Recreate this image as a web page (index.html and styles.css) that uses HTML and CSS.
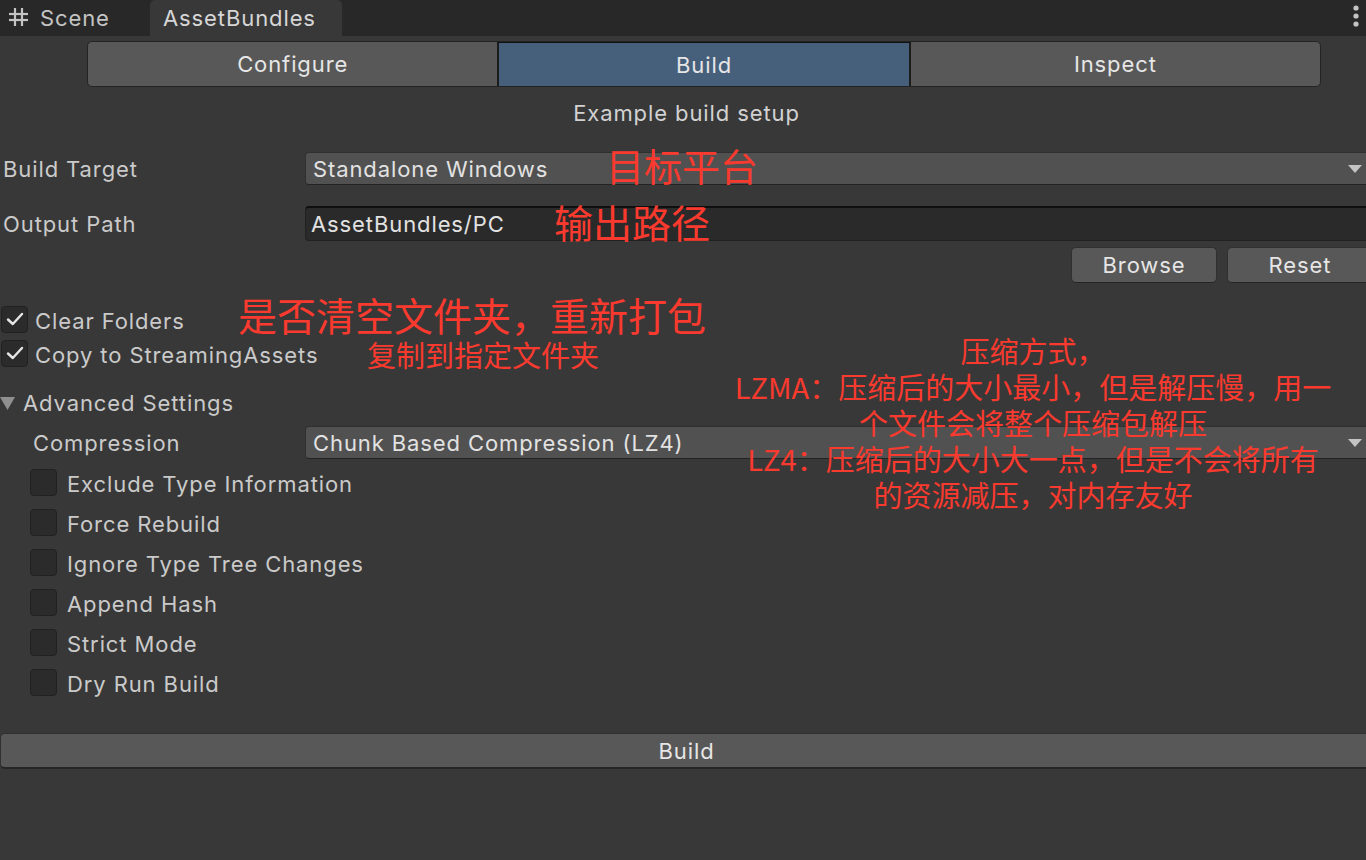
FILE: index.html
```html
<!DOCTYPE html>
<html lang="zh-CN">
<head>
<meta charset="utf-8">
<title>AssetBundles</title>
<link rel="stylesheet" href="styles.css">
</head>
<body>
<div class="window">
  <div class="tabbar">
    <div class="tab">
      <svg class="scene-icon" width="21" height="20" viewBox="0 0 21 20">
        <g stroke="#c4c4c4" stroke-width="2.2" fill="none">
          <line x1="7" y1="1" x2="7" y2="19"/>
          <line x1="14" y1="1" x2="14" y2="19"/>
          <line x1="1" y1="7" x2="20" y2="7"/>
          <line x1="1" y1="13" x2="20" y2="13"/>
        </g>
      </svg>
      <span>Scene</span>
    </div>
    <div class="tab active">AssetBundles</div>
    <div class="spacer"></div>
    <svg class="kebab" width="6" height="22" viewBox="0 0 6 22">
      <circle cx="3" cy="3" r="2.6" fill="#c4c4c4"/>
      <circle cx="3" cy="11" r="2.6" fill="#c4c4c4"/>
      <circle cx="3" cy="19" r="2.6" fill="#c4c4c4"/>
    </svg>
  </div>

  <div class="content">
    <div class="toolbar">
      <div class="seg">Configure</div>
      <div class="seg on">Build</div>
      <div class="seg">Inspect</div>
    </div>

    <div class="subtitle">Example build setup</div>

    <div class="row r-target">
      <div class="label">Build Target</div>
      <div class="dropdown">
        <span>Standalone Windows</span>
        <svg class="arrow" width="14" height="8" viewBox="0 0 14 8"><path d="M0 0H14L7 8Z" fill="#c4c4c4"/></svg>
      </div>
    </div>

    <div class="row r-output">
      <div class="label">Output Path</div>
      <div class="textfield">AssetBundles/PC</div>
    </div>

    <div class="btnrow">
      <div class="btn">Browse</div>
      <div class="btn">Reset</div>
    </div>

    <div class="toggle first">
      <div class="box checked">
        <svg width="18" height="14" viewBox="0 0 18 14"><path d="M2 7.5L6.8 12L16 2" stroke="#e6e6e6" stroke-width="2.4" fill="none" stroke-linecap="round" stroke-linejoin="round"/></svg>
      </div>
      <span>Clear Folders</span>
    </div>
    <div class="toggle">
      <div class="box checked">
        <svg width="18" height="14" viewBox="0 0 18 14"><path d="M2 7.5L6.8 12L16 2" stroke="#e6e6e6" stroke-width="2.4" fill="none" stroke-linecap="round" stroke-linejoin="round"/></svg>
      </div>
      <span>Copy to StreamingAssets</span>
    </div>

    <div class="foldout">
      <svg class="fold-arrow" width="15" height="15" viewBox="0 0 15 15"><path d="M0 1H15L7.5 14Z" fill="#8f8f8f"/></svg>
      <span>Advanced Settings</span>
    </div>

    <div class="group">
      <div class="row r-compress">
        <div class="label">Compression</div>
        <div class="dropdown">
          <span>Chunk Based Compression (LZ4)</span>
          <svg class="arrow" width="14" height="8" viewBox="0 0 14 8"><path d="M0 0H14L7 8Z" fill="#c4c4c4"/></svg>
        </div>
      </div>
      <div class="checks">
        <div class="check"><div class="box"></div><span>Exclude Type Information</span></div>
        <div class="check"><div class="box"></div><span>Force Rebuild</span></div>
        <div class="check"><div class="box"></div><span>Ignore Type Tree Changes</span></div>
        <div class="check"><div class="box"></div><span>Append Hash</span></div>
        <div class="check"><div class="box"></div><span>Strict Mode</span></div>
        <div class="check"><div class="box"></div><span>Dry Run Build</span></div>
      </div>
    </div>

    <div class="buildbtn">Build</div>
  </div>

  <div class="note n-target">目标平台</div>
  <div class="note n-output">输出路径</div>
  <div class="note n-clear">是否清空文件夹，重新打包</div>
  <div class="note n-copy">复制到指定文件夹</div>
  <div class="note n-compress">
    <div>压缩方式，</div>
    <div>LZMA：压缩后的大小最小，但是解压慢，用一</div>
    <div>个文件会将整个压缩包解压</div>
    <div>LZ4：压缩后的大小大一点，但是不会将所有</div>
    <div>的资源减压，对内存友好</div>
  </div>
</div>
</body>
</html>
```

FILE: styles.css
```css
html, body {
  margin: 0;
  padding: 0;
  background: #383838;
  overflow: hidden;
  width: 1366px;
  height: 860px;
}

.window {
  position: relative;
  width: 1376px;
  height: 860px;
  font-family: Inter, "Noto Sans", sans-serif;
  font-size: 22px;
  letter-spacing: 0.9px;
  color: #cacaca;
  background: #383838;
}

/* ---------- window tab bar ---------- */
.tabbar {
  display: flex;
  align-items: stretch;
  height: 36px;
  background: #282828;
}
.tab {
  display: flex;
  align-items: center;
  gap: 11px;
  width: 150px;
  box-sizing: border-box;
  padding-left: 8px;
  color: #c4c4c4;
}
.tab.active {
  width: 192px;
  padding-left: 13px;
  background: #383838;
  border-radius: 5px 5px 0 0;
  color: #d6d6d6;
}
.scene-icon { margin-top: -2px; }
.spacer { flex: 1; }
.kebab {
  align-self: flex-start;
  margin-top: 5px;
  margin-right: 17px;
}

/* ---------- content ---------- */
.content {
  display: flex;
  flex-direction: column;
  padding-right: 3px;
}

.toolbar {
  display: flex;
  margin: 5px 0 0 87px;
  width: 1234px;
  height: 46px;
  box-sizing: border-box;
  border: 1px solid #232323;
  border-radius: 5px;
  background: #585858;
  overflow: hidden;
}
.seg {
  flex: 1;
  display: flex;
  align-items: center;
  justify-content: center;
  color: #e6e6e6;
}
.seg.on {
  background: #46607c;
  border-left: 2px solid #1c1c1c;
  border-right: 2px solid #1c1c1c;
  border-top: 1px solid #111;
}

.subtitle {
  margin-top: 10px;
  height: 32px;
  line-height: 32px;
  text-align: center;
  color: #d2d2d2;
}

.row {
  display: flex;
  align-items: center;
}
.label {
  width: 302px;
  padding-left: 3px;
  flex-shrink: 0;
}
.r-target { margin-top: 23px; height: 33px; }
.r-output { margin-top: 21px; height: 35px; }

.dropdown {
  flex: 1;
  height: 33px;
  box-sizing: border-box;
  display: flex;
  align-items: center;
  justify-content: space-between;
  padding: 0 10px 0 7px;
  background: #515151;
  border: 1px solid #303030;
  border-bottom-color: #232323;
  border-radius: 4px;
  color: #e2e2e2;
}
.arrow { flex-shrink: 0; }

.textfield {
  flex: 1;
  height: 35px;
  box-sizing: border-box;
  display: flex;
  align-items: center;
  padding-left: 5px;
  background: #2a2a2a;
  border: 1px solid #212121;
  border-top: 2px solid #0f0f0f;
  border-radius: 4px;
  color: #e2e2e2;
}

.btnrow {
  display: flex;
  justify-content: flex-end;
  gap: 10px;
  margin-top: 6px;
}
.btn {
  width: 146px;
  height: 36px;
  box-sizing: border-box;
  display: flex;
  align-items: center;
  justify-content: center;
  background: #585858;
  border: 1px solid #303030;
  border-bottom-color: #242424;
  border-radius: 5px;
  color: #e6e6e6;
}

/* ---------- toggles ---------- */
.toggle {
  display: flex;
  align-items: center;
  height: 34px;
  gap: 7px;
  padding-left: 1px;
}
.toggle.first { margin-top: 19px; }

.box {
  width: 27px;
  height: 27px;
  box-sizing: border-box;
  flex-shrink: 0;
  display: flex;
  align-items: center;
  justify-content: center;
  background: #2b2b2b;
  border: 1px solid #212121;
  border-radius: 4px;
}
.toggle span, .check span { margin-top: 4px; }

.foldout {
  display: flex;
  align-items: center;
  gap: 8px;
  height: 34px;
  margin-top: 16px;
}
.fold-arrow { margin-top: 1px; }

.group {
  margin-left: 30px;
}
.r-compress { margin-top: 6px; height: 33px; }
.r-compress .label { width: 272px; padding-left: 3px; }

.checks {
  display: flex;
  flex-direction: column;
  margin-top: 3px;
}
.check {
  display: flex;
  align-items: center;
  gap: 10px;
  height: 40px;
}

.buildbtn {
  margin-top: 31px;
  height: 36px;
  box-sizing: border-box;
  display: flex;
  align-items: center;
  justify-content: center;
  background: #585858;
  border: 1px solid #303030;
  border-bottom: 2px solid #262626;
  border-radius: 5px;
  color: #e6e6e6;
}

/* ---------- red annotations ---------- */
.note {
  position: absolute;
  font-family: "Noto Sans CJK SC", "Noto Sans", sans-serif;
  letter-spacing: 0;
  color: #fa3a2e;
  line-height: 1;
  white-space: nowrap;
}
.n-target { left: 606px; top: 146px; font-size: 38px; }
.n-output { left: 554px; top: 202px; font-size: 39px; }
.n-clear { left: 238px; top: 295px; font-size: 39px; }
.n-copy { left: 367px; top: 340px; font-size: 29px; }
.n-compress {
  left: 731px;
  top: 332px;
  width: 604px;
  font-size: 29px;
  line-height: 36px;
  text-align: center;
}
```
